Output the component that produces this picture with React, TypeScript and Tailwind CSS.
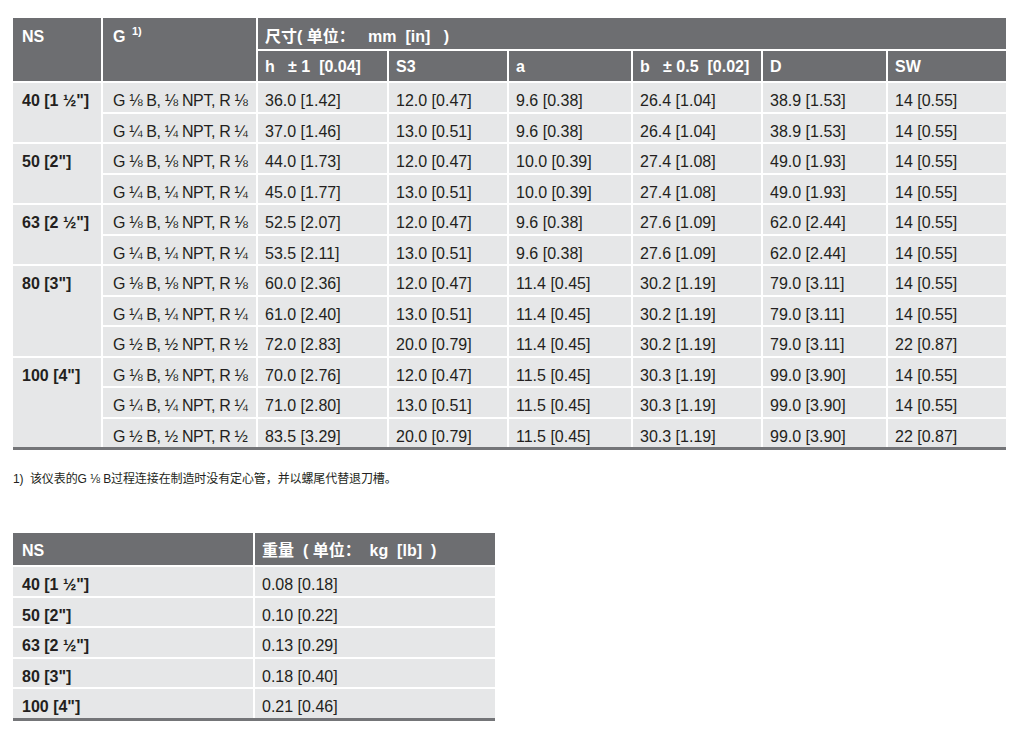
const G8 = "G ⅛ B, ⅛ NPT, R ⅛";
const G4 = "G ¼ B, ¼ NPT, R ¼";
const G2 = "G ½ B, ½ NPT, R ½";

type Gruppe = { ns: string; rows: string[][] };

const masse: Gruppe[] = [
  {
    ns: '40 [1 ½"]',
    rows: [
      [G8, "36.0 [1.42]", "12.0 [0.47]", "9.6 [0.38]", "26.4 [1.04]", "38.9 [1.53]", "14 [0.55]"],
      [G4, "37.0 [1.46]", "13.0 [0.51]", "9.6 [0.38]", "26.4 [1.04]", "38.9 [1.53]", "14 [0.55]"],
    ],
  },
  {
    ns: '50 [2"]',
    rows: [
      [G8, "44.0 [1.73]", "12.0 [0.47]", "10.0 [0.39]", "27.4 [1.08]", "49.0 [1.93]", "14 [0.55]"],
      [G4, "45.0 [1.77]", "13.0 [0.51]", "10.0 [0.39]", "27.4 [1.08]", "49.0 [1.93]", "14 [0.55]"],
    ],
  },
  {
    ns: '63 [2 ½"]',
    rows: [
      [G8, "52.5 [2.07]", "12.0 [0.47]", "9.6 [0.38]", "27.6 [1.09]", "62.0 [2.44]", "14 [0.55]"],
      [G4, "53.5 [2.11]", "13.0 [0.51]", "9.6 [0.38]", "27.6 [1.09]", "62.0 [2.44]", "14 [0.55]"],
    ],
  },
  {
    ns: '80 [3"]',
    rows: [
      [G8, "60.0 [2.36]", "12.0 [0.47]", "11.4 [0.45]", "30.2 [1.19]", "79.0 [3.11]", "14 [0.55]"],
      [G4, "61.0 [2.40]", "13.0 [0.51]", "11.4 [0.45]", "30.2 [1.19]", "79.0 [3.11]", "14 [0.55]"],
      [G2, "72.0 [2.83]", "20.0 [0.79]", "11.4 [0.45]", "30.2 [1.19]", "79.0 [3.11]", "22 [0.87]"],
    ],
  },
  {
    ns: '100 [4"]',
    rows: [
      [G8, "70.0 [2.76]", "12.0 [0.47]", "11.5 [0.45]", "30.3 [1.19]", "99.0 [3.90]", "14 [0.55]"],
      [G4, "71.0 [2.80]", "13.0 [0.51]", "11.5 [0.45]", "30.3 [1.19]", "99.0 [3.90]", "14 [0.55]"],
      [G2, "83.5 [3.29]", "20.0 [0.79]", "11.5 [0.45]", "30.3 [1.19]", "99.0 [3.90]", "22 [0.87]"],
    ],
  },
];

const gewichte = [
  ['40 [1 ½"]', "0.08 [0.18]"],
  ['50 [2"]', "0.10 [0.22]"],
  ['63 [2 ½"]', "0.13 [0.29]"],
  ['80 [3"]', "0.18 [0.40]"],
  ['100 [4"]', "0.21 [0.46]"],
];

const span: Record<number, string> = { 2: "row-span-2", 3: "row-span-3" };

const kopf = "bg-[#6d6e71] text-white font-bold pl-[7px] whitespace-pre";
const zelle = "bg-[#e6e7e8] text-[#231f20] pl-[7px] pt-[9px] whitespace-nowrap";

export default function App() {
  return (
    <div className="min-h-screen bg-white pl-[13px] pt-[18px] font-['Liberation_Sans','Noto_Sans_CJK_SC',sans-serif] text-[16px] leading-[18px]">
      <div className="w-[993px]">
        <div className="grid grid-cols-[88px_153px_129px_118px_122px_128px_123px_118px] grid-rows-[31px_30px_repeat(12,28.5px)] gap-[2px]">
          <div className={`${kopf} row-span-2 pl-[9px] pt-[10px]`}>NS</div>
          <div className={`${kopf} row-span-2 pl-[10px] pt-[10px]`}>
            G <sup className="text-[11px] align-top relative top-[3px] ml-[2px]">1)</sup>
          </div>
          <div className={`${kopf} col-span-6 pt-[10px]`}>尺寸( 单位：   mm  [in]   )</div>
          <div className={`${kopf} pt-[7px]`}>h   ± 1  [0.04]</div>
          <div className={`${kopf} pt-[7px]`}>S3</div>
          <div className={`${kopf} pt-[7px]`}>a</div>
          <div className={`${kopf} pt-[7px]`}>b   ± 0.5  [0.02]</div>
          <div className={`${kopf} pt-[7px]`}>D</div>
          <div className={`${kopf} pt-[7px]`}>SW</div>

          {masse.map((g) => [
            <div key={g.ns} className={`${zelle} ${span[g.rows.length]} font-bold pl-[9px]`}>
              {g.ns}
            </div>,
            ...g.rows.flatMap((r, i) =>
              r.map((v, j) => (
                <div
                  key={`${g.ns}-${i}-${j}`}
                  className={`${zelle} ${j === 0 ? "pl-[10px] tracking-[-0.35px]" : ""}`}
                >
                  {v}
                </div>
              ))
            ),
          ])}
        </div>
        <div className="h-[3px] bg-[#747578]" />
      </div>

      <p className="mt-[22px] text-[12px] leading-[14px] text-[#231f20] tracking-[-0.1px]">
        1)&nbsp;&nbsp;该仪表的G ⅛ B过程连接在制造时没有定心管，并以螺尾代替退刀槽。
      </p>

      <div className="w-[482px] mt-[47px]">
        <div className="grid grid-cols-[240px_240px] grid-rows-[32px_repeat(5,28.5px)] gap-[2px]">
          <div className={`${kopf} pl-[9px] pt-[9px]`}>NS</div>
          <div className={`${kopf} pt-[9px]`}>重量  ( 单位：  kg  [lb]  )</div>
          {gewichte.map(([ns, kg]) => [
            <div key={ns} className={`${zelle} font-bold pl-[9px] pt-[7px]`}>
              {ns}
            </div>,
            <div key={ns + "kg"} className={`${zelle} pt-[4px]`}>
              {kg}
            </div>,
          ])}
        </div>
        <div className="h-[3px] bg-[#747578]" />
      </div>
    </div>
  );
}
